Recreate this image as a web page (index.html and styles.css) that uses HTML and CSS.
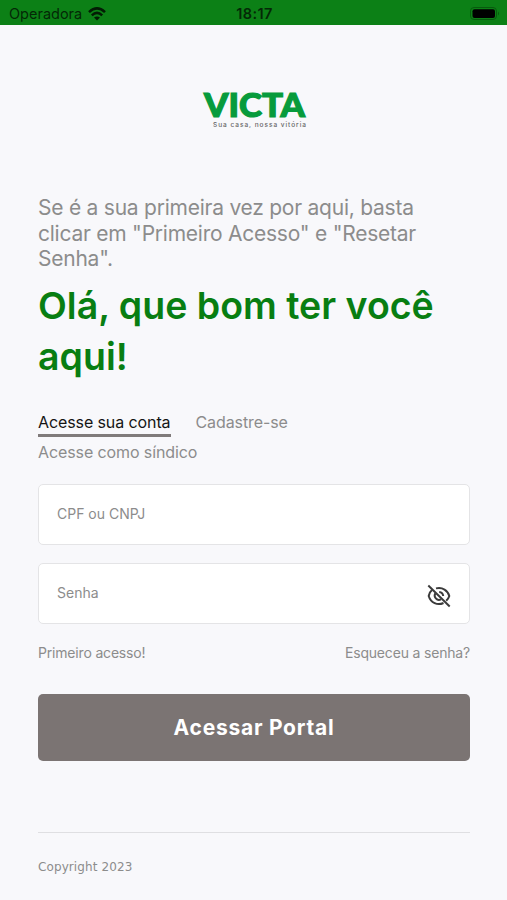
FILE: index.html
```
<!DOCTYPE html>
<html lang="pt-BR">
  <head>
    <meta charset="UTF-8" />
    <meta name="viewport" content="width=device-width, initial-scale=1.0" />
    <title>Victa</title>
    <link rel="stylesheet" href="styles.css">
  </head>
  <body>
    <div class="status-bar">
      <div class="carrier">
        <span>Operadora</span>
        <svg class="wifi" viewBox="0 0 18 14">
          <path d="M1 5.2 Q9 -2.4 17 5.2" />
          <path d="M3.8 8.3 Q9 3.5 14.2 8.3" />
          <path class="wifi-dot" d="M6 10.6 Q9 8.2 12 10.6 L9 13.6 Z" />
        </svg>
      </div>
      <div class="clock">18:17</div>
      <svg class="battery" viewBox="0 0 30 14">
        <rect class="battery-case" x="0.5" y="0.5" width="26" height="12" rx="3.5" />
        <rect x="2.5" y="2.3" width="22.5" height="8.6" rx="2" />
        <path class="battery-tip" d="M28 4.5 Q30 6.5 28 8.5 Z" />
      </svg>
    </div>

    <main class="login">
      <svg class="logo" viewBox="0 0 108 54">
        <text class="logo-name" x="4" y="42" textLength="101" lengthAdjust="spacingAndGlyphs">VICTA</text>
        <text class="logo-slogan" x="13" y="51.5" textLength="93">Sua casa, nossa vitória</text>
      </svg>

      <p class="intro">Se é a sua primeira vez por aqui, basta<br>clicar em "Primeiro Acesso" e "Resetar<br>Senha".</p>
      <h1>Olá, que bom ter você<br>aqui!</h1>

      <nav class="tabs">
        <a class="tab active">Acesse sua conta</a>
        <a class="tab register">Cadastre-se</a>
        <a class="tab manager">Acesse como síndico</a>
      </nav>

      <form>
        <div class="field">
          <input type="text" class="text-input" placeholder="CPF ou CNPJ" />
        </div>
        <div class="field">
          <input type="password" class="text-input" placeholder="Senha" />
          <svg class="eye" viewBox="0 0 24 24">
            <path d="M9 4.4 C15.5 2.8 20.8 6.5 22.3 12 C21.7 14 20.6 15.6 19.2 16.8" />
            <path d="M5 6 C3.2 7.5 2 9.7 1.7 12 C3.8 19 10.5 21.8 16.5 19" />
            <path d="M8.3 9.3 C6.3 12.8 9.8 17.4 14 15.4" />
            <path d="M12.2 8 C14.5 8.2 16 9.8 16.2 12" />
            <path d="M1.3 1.5 L22.7 22.5" />
          </svg>
        </div>
        <div class="links">
          <a class="first-access">Primeiro acesso!</a>
          <a class="forgot">Esqueceu a senha?</a>
        </div>
        <button type="button" class="submit">Acessar Portal</button>
      </form>

      <footer>Copyright 2023</footer>
    </main>
  </body>
</html>
```
FILE: styles.css
```
* {
  box-sizing: border-box;
}
body {
  margin: 0;
  height: 900px;
  overflow: hidden;
  background: #f8f8fb;
  color: #8c8c8c;
  font-family: Inter, "Liberation Sans", sans-serif;
  white-space: nowrap;
}
.status-bar {
  display: grid;
  grid-template-columns: 1fr auto 1fr;
  align-items: center;
  height: 25px;
  padding: 2px 7px 0 9px;
  background: #0c8016;
  color: #042806;
  font-size: 14.5px;
}
.carrier {
  display: flex;
  align-items: center;
  gap: 6px;
}
.wifi {
  width: 18px;
  height: 14px;
  fill: none;
  stroke: #031c04;
  stroke-width: 2.5;
}
.wifi-dot {
  fill: #031c04;
  stroke: none;
}
.clock {
  font-weight: 600;
  letter-spacing: 0.4px;
}
.battery {
  width: 30px;
  height: 14px;
  justify-self: end;
}
.battery-case {
  fill: none;
  stroke: #075b0d;
}
.battery-tip {
  fill: #075b0d;
}
.login {
  padding: 50px 37px 0 38px;
}
.logo {
  display: block;
  width: 108px;
  height: 54px;
  margin: 0 auto;
}
.logo-name {
  fill: #079b3c;
  stroke: #079b3c;
  stroke-width: 1.2px;
  font-family: Lato, sans-serif;
  font-size: 33px;
  font-weight: 900;
}
.logo-slogan {
  fill: #666;
  font-size: 6.5px;
  font-weight: 500;
}
.intro {
  margin: 66px 0 0;
  font-size: 21px;
  line-height: 25.6px;
  letter-spacing: -0.24px;
}
h1 {
  margin: 8px 0 0;
  color: #087e12;
  font-size: 37.5px;
  font-weight: 600;
  line-height: 51px;
}
.tabs {
  display: flex;
  flex-wrap: wrap;
  column-gap: 25px;
  row-gap: 3px;
  margin-top: 28px;
  font-size: 16px;
  line-height: 24px;
  letter-spacing: -0.1px;
}
.tab.active {
  height: 27px;
  border-bottom: 3px solid #807b7b;
  color: #151515;
}
.tab.manager {
  width: 100%;
}
form {
  margin-top: 20px;
}
.field {
  position: relative;
  height: 61px;
  margin-bottom: 18px;
}
.text-input {
  display: block;
  width: 100%;
  height: 100%;
  padding: 0 60px 1px 18px;
  border: 1px solid #e4e4e6;
  border-radius: 5px;
  background: #fff;
  font-family: inherit;
  font-size: 14px;
}
.text-input::placeholder {
  color: #8c8c8c;
}
.eye {
  position: absolute;
  top: 21px;
  right: 19px;
  width: 24px;
  height: 24px;
  fill: none;
  stroke: #3b3b3b;
  stroke-width: 2;
}
.links {
  display: flex;
  justify-content: space-between;
  font-size: 14px;
  line-height: 22px;
  letter-spacing: -0.18px;
}
.submit {
  display: block;
  width: 100%;
  height: 67px;
  margin-top: 30px;
  padding: 0;
  border: none;
  border-radius: 5px;
  background: #7b7473;
  color: #fff;
  font-family: inherit;
  font-size: 21px;
  font-weight: 700;
  letter-spacing: 0.75px;
}
footer {
  margin-top: 71px;
  padding-top: 26px;
  border-top: 1px solid #dfdfe2;
  font-family: "DejaVu Sans", sans-serif;
  font-size: 12px;
  line-height: 16px;
  letter-spacing: 0.1px;
}
```
